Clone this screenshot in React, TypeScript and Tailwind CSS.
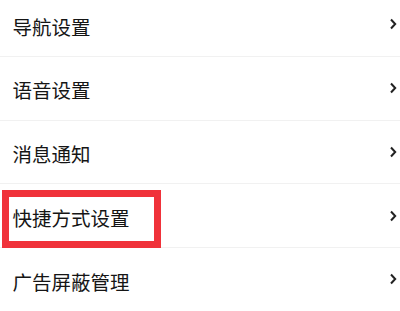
const items = ['导航设置', '语音设置', '消息通知', '快捷方式设置', '广告屏蔽管理'];

function Chevron() {
  return (
    <svg width="8" height="12" viewBox="0 0 8 12" className="shrink-0">
      <path d="M2 1.5 L6.2 6 L2 10.5" fill="none" stroke="#222" strokeWidth="2" />
    </svg>
  );
}

export default function App() {
  return (
    <div
      className="w-[400px] h-[311px] overflow-hidden bg-white"
      style={{ fontFamily: '"Noto Sans CJK SC", "Noto Sans", sans-serif' }}>
      <div className="-mt-[7px]">
        {items.map((label, i) => (
          <div
            key={label}
            className="relative flex h-[63.75px] items-center justify-between border-b border-[#f1f1f1] pl-[12.5px] pr-[3px]">
            <span className="pt-[4px] text-[19.5px] leading-none text-[#151515]">{label}</span>
            <Chevron />
            {i === 3 && (
              <div className="pointer-events-none absolute left-[2px] top-[6px] h-[58px] w-[159px] border-[7px] border-[#f0323a]" />
            )}
          </div>
        ))}
      </div>
    </div>
  );
}
